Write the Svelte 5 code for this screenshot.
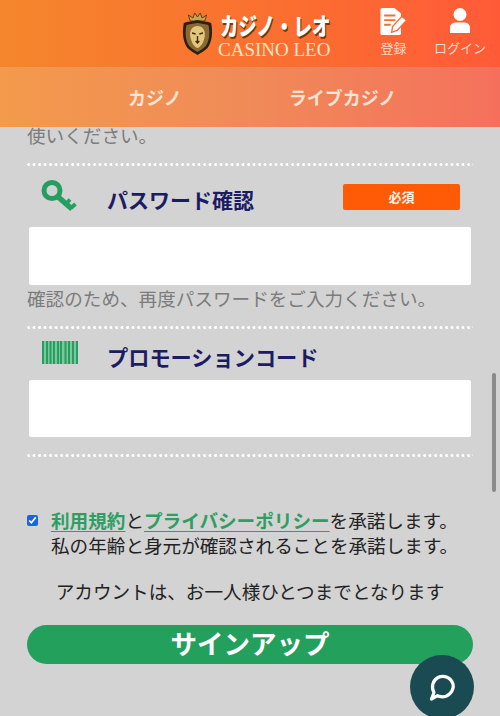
<script>
  let agreed = $state(true);
</script>

<div class="page">
  <header class="top">
    <div class="logo">
      <svg class="crest" width="31" height="44" viewBox="0 0 34 44" preserveAspectRatio="none">
        <path d="M9 9 L7 3 L12 6 L14 1 L17 5 L20 1 L22 6 L27 3 L25 9 Z" fill="#c9a24a" stroke="#3a2a12" stroke-width=".8"/>
        <path d="M17 8 C23 10 28 9 32 11 C34 20 33 30 28 36 C25 39 20 41 17 43 C14 41 9 39 6 36 C1 30 0 20 2 11 C6 9 11 10 17 8 Z" fill="#2c2014"/>
        <path d="M17 11 C22 12 26 12 29 13 C31 21 30 29 26 34 C23 37 20 38 17 40 C14 38 11 37 8 34 C4 29 3 21 5 13 C8 12 12 12 17 11 Z" fill="#8a6a32"/>
        <path d="M17 14 C22 14 26 18 25 24 C24 30 21 35 17 36 C13 35 10 30 9 24 C8 18 12 14 17 14 Z" fill="#e3c67c"/>
        <path d="M11 21 L15 22 M19 22 L23 21 M15 29 L17 31 L19 29 M17 24 L17 30" stroke="#3a2a12" stroke-width="1.5" fill="none"/>
      </svg>
      <div class="logo-text">
        <span class="logo-jp">カジノ・レオ</span>
        <span class="logo-en">CASINO LEO</span>
      </div>
    </div>
    <div class="top-link reg">
      <svg width="29" height="28" viewBox="0 0 30 30">
        <path d="M3 0 H16 L23 6 V27 a2 2 0 0 1 -2 2 H3 a2 2 0 0 1 -2 -2 V2 a2 2 0 0 1 2 -2 Z" fill="#fff"/>
        <path d="M5 8 H17 M5 13 H17 M5 18 H12" stroke="#fb6a33" stroke-width="2"/>
        <path d="M13 26 L14 20 L24 9 L29 13 L19 24 Z" fill="#fff" stroke="#fb6a33" stroke-width="1.4"/>
      </svg>
      <span>登録</span>
    </div>
    <div class="top-link login">
      <svg width="20" height="26" viewBox="0 0 20 26">
        <circle cx="10" cy="6.500" r="6.500" fill="#fff"/>
        <path d="M0 25 V20 C0 16 3 14.500 6 14.500 H14 C17 14.500 20 16 20 20 V25 Z" fill="#fff"/>
      </svg>
      <span>ログイン</span>
    </div>
  </header>

  <nav class="tabs">
    <span class="tab casino">カジノ</span>
    <span class="tab live">ライブカジノ</span>
  </nav>

  <main class="content">
    <p class="hint first">使いください。</p>
    <div class="dots first-dots"></div>

    <div class="field-head pass">
      <svg class="ico" width="36" height="32" viewBox="0 0 36 32">
        <circle cx="11" cy="10.500" r="8" fill="none" stroke="#269e5f" stroke-width="5"/>
        <path d="M16 16 L31 29" fill="none" stroke="#269e5f" stroke-width="5.500"/>
        <path d="M25 24 L29 19.500 M30 28 L34.500 24" fill="none" stroke="#269e5f" stroke-width="3.800"/>
      </svg>
      <h3>パスワード確認</h3>
      <span class="badge">必須</span>
    </div>
    <input class="box" type="password" aria-label="パスワード確認" />
    <p class="hint help">確認のため、再度パスワードをご入力ください。</p>
    <div class="dots"></div>

    <div class="field-head promo">
      <svg class="ico" width="36" height="23" viewBox="0 0 36 23">
        <rect width="36" height="23" fill="#7cc79b"/>
        <path d="M1 0 V23 M5 0 V23 M8.500 0 V23 M12 0 V23 M16 0 V23 M19 0 V23 M23.500 0 V23 M27 0 V23 M31 0 V23 M35 0 V23" stroke="#269e5f" stroke-width="2"/>
      </svg>
      <h3>プロモーションコード</h3>
    </div>
    <input class="box promo-box" type="text" aria-label="プロモーションコード" />
    <div class="dots"></div>

    <label class="terms">
      <input type="checkbox" bind:checked={agreed} />
      <span>
        <a href="#terms">利用規約</a>と<a href="#privacy">プライバシーポリシー</a>を承諾します。<br />
        私の年齢と身元が確認されることを承諾します。
      </span>
    </label>

    <p class="once">アカウントは、お一人様ひとつまでとなります</p>
    <button class="signup">サインアップ</button>
  </main>

  <div class="scrollbar"></div>
  <button class="chat" aria-label="chat">
    <svg width="30" height="30" viewBox="0 0 30 30">
      <path d="M4.500 27 L7 20.500 C4 15 5.500 8.500 11 5.500 C17 2.500 24 5.500 26 12 C27.500 19 21 25.500 14 24.700 C12.500 24.500 11.500 24.200 10.500 23.700 Z" fill="none" stroke="#fff" stroke-width="3.200" stroke-linejoin="round"/>
    </svg>
  </button>
</div>

<style>
  :global(body) {
    margin: 0;
    font-family: "Noto Sans CJK JP", "Liberation Sans", sans-serif;
  }

  .page {
    position: relative;
    width: 500px;
    height: 716px;
    overflow: hidden;
    background: #d3d3d3;
    display: flex;
    flex-direction: column;
  }

  .top {
    height: 67px;
    flex: none;
    display: flex;
    background: linear-gradient(90deg, #f5862c 0%, #fb6d30 60%, #ff5a38 100%);
    color: #fff;
  }

  .logo {
    margin-left: 182px;
    width: 150px;
    display: flex;
    align-items: flex-start;
    gap: 5px;
    padding-top: 13px;
  }

  .crest {
    flex: none;
    margin-top: -1px;
  }

  .logo-text {
    flex: none;
    width: 114px;
    display: flex;
    flex-direction: column;
    align-items: flex-start;
  }

  .logo-jp {
    margin: 0 0 3px 2px;
    font-size: 21px;
    line-height: 24px;
    font-weight: 900;
    transform: scale(0.88, 1.15);
    transform-origin: left center;
    text-shadow: 1px 1px 0 #6b3a12;
    white-space: nowrap;
  }

  .logo-en {
    font-family: "Liberation Serif", serif;
    font-size: 19px;
    line-height: 19px;
    color: #fbe3c6;
    white-space: nowrap;
  }

  .top-link {
    display: flex;
    flex-direction: column;
    align-items: center;
    font-size: 13px;
    line-height: 16px;
    color: #fcdcc8;
  }

  .top-link svg {
    display: block;
  }

  .reg {
    margin-left: 47px;
    width: 29px;
    padding-top: 8px;
    gap: 4px;
  }

  .login {
    margin-left: 26px;
    width: 52px;
    padding-top: 8px;
    gap: 6px;
    white-space: nowrap;
  }

  .tabs {
    position: relative;
    z-index: 1;
    height: 60px;
    flex: none;
    display: flex;
    align-items: center;
    font-size: 18px;
    font-weight: 700;
    color: #fce3d3;
    background: linear-gradient(90deg, #f39a4c 0%, #f08a58 50%, #f5705c 100%);
  }

  .casino {
    margin-left: 128px;
  }

  .live {
    margin-left: 107px;
  }

  .content {
    flex: 1;
    min-height: 0;
    padding: 0 27px;
  }

  .hint {
    margin: 0;
    font-size: 18.600px;
    line-height: 24px;
    color: #7c7c7c;
    white-space: nowrap;
  }

  .hint.first {
    line-height: 20px;
    margin-top: -2px;
  }

  .hint.help {
    margin-top: 1px;
  }

  .dots {
    height: 3px;
    background-image: radial-gradient(circle at 1.500px 1.500px, #fff 1.300px, transparent 1.500px);
    background-size: 5.500px 3px;
    background-repeat: repeat-x;
  }

  .first-dots {
    margin-top: 18px;
  }

  .field-head {
    position: relative;
    display: flex;
    align-items: flex-start;
  }

  .pass {
    height: 61px;
  }

  .promo {
    height: 51px;
  }

  .ico {
    display: block;
    margin-left: 14px;
    flex: none;
  }

  .pass .ico {
    margin-top: 14px;
  }

  .promo .ico {
    margin-left: 15px;
    margin-top: 12px;
  }

  h3 {
    margin: 0 0 0 30px;
    font-size: 21px;
    line-height: 30px;
    font-weight: 700;
    color: #1c1c64;
    white-space: nowrap;
  }

  .pass h3 {
    margin-top: 18px;
  }

  .promo h3 {
    margin-left: 29px;
    margin-top: 13px;
    font-size: 21.200px;
  }

  .badge {
    position: absolute;
    left: 316px;
    top: 18px;
    width: 117px;
    height: 26px;
    border-radius: 2px;
    background: #ff5a05;
    color: #fff3e8;
    font-size: 13px;
    font-weight: 700;
    line-height: 25px;
    text-align: center;
  }

  .box {
    display: block;
    box-sizing: border-box;
    width: 442px;
    height: 58px;
    margin: 0 0 0 2px;
    border: 0;
    border-radius: 2px;
    background: #fff;
  }

  .promo-box {
    height: 57px;
    margin-bottom: 17px;
  }

  .help + .dots {
    margin-top: 16px;
  }

  .terms {
    display: flex;
    align-items: flex-start;
    margin-top: 50px;
    font-size: 18.600px;
    line-height: 25px;
    color: #222;
    white-space: nowrap;
  }

  .terms input {
    width: 11px;
    height: 11px;
    margin: 8px 13px 0 0;
    flex: none;
    accent-color: #1a66d8;
  }

  .terms a {
    color: #2f9e63;
    font-weight: 700;
    text-decoration: underline;
    text-underline-offset: 3px;
  }

  .once {
    margin: 21px 0 0;
    font-size: 18.600px;
    line-height: 25px;
    color: #222;
    text-align: center;
    white-space: nowrap;
  }

  .signup {
    display: block;
    width: 446px;
    height: 39px;
    margin-top: 22px;
    padding: 0 0 4px;
    border: 0;
    border-radius: 20px;
    background: #24a05d;
    color: #fff;
    font: 700 26.500px/34px "Noto Sans CJK JP", sans-serif;
  }

  .scrollbar {
    position: absolute;
    left: 492px;
    top: 373px;
    width: 4px;
    height: 119px;
    border-radius: 2px;
    background: #8a8a8a;
  }

  .chat {
    position: absolute;
    left: 410px;
    top: 655px;
    width: 64px;
    height: 64px;
    padding: 0;
    border: 0;
    border-radius: 50%;
    background: #1b4b52;
    display: flex;
    align-items: center;
    justify-content: center;
  }
</style>
